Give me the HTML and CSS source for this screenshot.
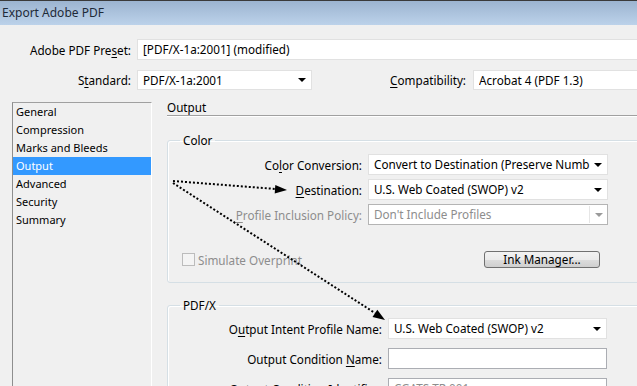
FILE: index.html
```html
<!DOCTYPE html>
<html lang="en">
<head>
  <meta charset="UTF-8" />
  <title>Export Adobe PDF</title>
  <link rel="stylesheet" href="styles.css">
</head>
<body>
  <div class="titlebar">Export Adobe PDF</div>

  <div class="top">
    <div class="top-row">
      <label class="lbl lbl-main">Adobe PDF Pre<u>s</u>et:</label>
      <div class="field preset-field">[PDF/X-1a:2001] (modified)</div>
    </div>
    <div class="top-row">
      <label class="lbl lbl-main">S<u>t</u>andard:</label>
      <div class="field select std-select"><span>PDF/X-1a:2001</span><i class="arrow"></i></div>
      <label class="lbl lbl-compat"><u>C</u>ompatibility:</label>
      <div class="field select compat-select"><span>Acrobat 4 (PDF 1.3)</span></div>
    </div>
  </div>

  <div class="main">
    <ul class="nav">
      <li>General</li>
      <li>Compression</li>
      <li>Marks and Bleeds</li>
      <li class="active">Output</li>
      <li>Advanced</li>
      <li>Security</li>
      <li>Summary</li>
    </ul>

    <div class="panel">
      <div class="panel-title">Output</div>

      <fieldset class="group group-color">
        <legend>Color</legend>
        <div class="form-row">
          <label class="lbl">Co<u>l</u>or Conversion:</label>
          <div class="field select"><span>Convert to Destination (Preserve Numb</span><i class="arrow"></i></div>
        </div>
        <div class="form-row">
          <label class="lbl"><u>D</u>estination:</label>
          <div class="field select"><span>U.S. Web Coated (SWOP) v2</span><i class="arrow"></i></div>
        </div>
        <div class="form-row disabled">
          <label class="lbl"><u>P</u>rofile Inclusion Policy:</label>
          <div class="field select select-off"><span>Don't Include Profiles</span><i class="arrow-box"><i class="arrow"></i></i></div>
        </div>
        <div class="check-row">
          <span class="checkbox"></span>
          <span class="check-label">Simulate Overprint</span>
          <button class="btn">Ink Manager...</button>
        </div>
      </fieldset>

      <fieldset class="group group-pdfx">
        <legend>PDF/X</legend>
        <div class="form-row">
          <label class="lbl">O<u>u</u>tput Intent Profile Name:</label>
          <div class="field select"><span>U.S. Web Coated (SWOP) v2</span><i class="arrow"></i></div>
        </div>
        <div class="form-row">
          <label class="lbl">Output Condition <u>N</u>ame:</label>
          <div class="field text-field"></div>
        </div>
        <div class="form-row">
          <label class="lbl">Output Condition Identifier:</label>
          <div class="field text-field off"><span>CGATS TR 001</span></div>
        </div>
      </fieldset>
    </div>
  </div>

  <svg class="arrows" width="637" height="386" viewBox="0 0 637 386">
    <g stroke="#000" stroke-width="2" stroke-dasharray="2 2" fill="none">
      <line x1="173" y1="181" x2="276" y2="189" />
      <line x1="173" y1="183" x2="375" y2="313" />
    </g>
    <g fill="#000">
      <polygon points="287,190 274.7,193.5 275.3,185" />
      <polygon points="385,320 372.5,317 377.3,309.8" />
    </g>
  </svg>
</body>
</html>
```

FILE: styles.css
```css
html, body {
  margin: 0;
  width: 637px;
  height: 386px;
  overflow: hidden;
}

body {
  position: relative;
  background: #f0f0f0;
  font-family: "Noto Sans", sans-serif;
  font-size: 11.7px;
  color: #000;
}

u {
  text-decoration-thickness: 1px;
  text-underline-offset: 2px;
}

.titlebar {
  height: 24px;
  line-height: 24px;
  padding-left: 2px;
  border-top: 1px solid #3a3a3a;
  background: linear-gradient(#9cb4d0, #bcd2ea);
  color: #1e2a38;
  font-size: 12px;
}

/* top rows */
.top {
  padding-top: 14px;
}

.top-row {
  display: flex;
  align-items: center;
  margin-bottom: 10px;
}

.lbl {
  flex: none;
  text-align: right;
  white-space: nowrap;
}

.lbl-main {
  width: 131px;
  margin-right: 6px;
}

.lbl-compat {
  width: 154px;
  margin-right: 7px;
}

.field {
  flex: none;
  box-sizing: border-box;
  height: 21px;
  background: #fff;
  border: 1px solid #e1e1e1;
  padding: 0 5px;
  line-height: 19px;
  white-space: nowrap;
  overflow: hidden;
}

.preset-field {
  width: 540px;
}

.select {
  display: flex;
  align-items: center;
}

.select span {
  flex: 1;
  overflow: hidden;
}

.arrow {
  flex: none;
  width: 0;
  height: 0;
  border-left: 4px solid transparent;
  border-right: 4px solid transparent;
  border-top: 4px solid #000;
  margin-left: 4px;
}

.std-select {
  width: 175px;
  height: 20px;
  padding-right: 5px;
}

.compat-select {
  width: 200px;
  height: 20px;
}

/* main area */
.main {
  display: flex;
  align-items: flex-start;
  margin-top: 3px;
}

.nav {
  flex: none;
  list-style: none;
  margin: 2px 0 0 12px;
  padding: 0;
  width: 138px;
  height: 300px;
  border-left: 1px solid #8e8e8e;
  border-top: 1px solid #a0a0a0;
  border-right: 1px solid #fff;
  font-size: 11px;
}

.nav li {
  height: 18px;
  line-height: 18px;
  padding-left: 3px;
}

.nav .active {
  background: #3399ff;
  color: #fff;
}

.panel {
  flex: none;
  width: 490px;
  margin-left: 15px;
}

.panel-title {
  line-height: 15px;
  border-bottom: 1px solid #a0a0a0;
  box-shadow: 0 1px 0 #fff;
}

.group {
  box-sizing: border-box;
  width: 490px;
  margin: 16px 0 0;
  padding: 0 0 14px;
  border: 1px solid #d5dfe5;
  border-radius: 3px;
  box-shadow: inset 1px 1px 0 #fff;
}

.group legend {
  margin-left: 12px;
  padding: 0 3px;
  line-height: 16px;
}

.group-color .form-row:first-of-type {
  margin-top: 6px;
}

.form-row {
  display: flex;
  align-items: center;
  margin-bottom: 4px;
}

.group-color .lbl {
  width: 194px;
  margin-right: 6px;
}

.group-color .field {
  width: 240px;
}

.disabled .lbl {
  color: #8d8d8d;
}

.select-off {
  border-color: #b4b4b4;
  color: #8d8d8d;
  padding-right: 0;
}

.arrow-box {
  flex: none;
  display: flex;
  align-items: center;
  justify-content: center;
  width: 17px;
  height: 17px;
  border-left: 1px solid #e6e6e6;
}

.arrow-box .arrow {
  margin: 0;
  border-top-color: #9a9a9a;
}

.check-row {
  display: flex;
  align-items: center;
  margin-top: 26px;
  height: 17px;
}

.checkbox {
  flex: none;
  box-sizing: border-box;
  width: 13px;
  height: 13px;
  margin-left: 14px;
  border: 1px solid #bcbcbc;
  background: #f4f4f4;
}

.check-label {
  margin-left: 3px;
  color: #8d8d8d;
  white-space: nowrap;
}

.btn {
  flex: none;
  box-sizing: border-box;
  width: 116px;
  height: 17px;
  margin-left: auto;
  margin-right: 56px;
  padding: 0;
  font: inherit;
  line-height: 15px;
  border: 1px solid #707070;
  border-radius: 3px;
  background: linear-gradient(#f2f2f2 0%, #ebebeb 50%, #dddddd 51%, #cfcfcf 100%);
}

.group-pdfx {
  margin-top: 14px;
}

.group-pdfx .form-row {
  margin-bottom: 9px;
}

.group-pdfx .form-row:first-of-type {
  margin-top: 5px;
}

.group-pdfx .lbl {
  width: 214px;
  margin-right: 6px;
}

.group-pdfx .field {
  width: 219px;
}

.text-field {
  border-color: #abadb3;
}

.text-field.off {
  color: #8d8d8d;
}

.arrows {
  position: absolute;
  top: 0;
  left: 0;
  pointer-events: none;
}
```
